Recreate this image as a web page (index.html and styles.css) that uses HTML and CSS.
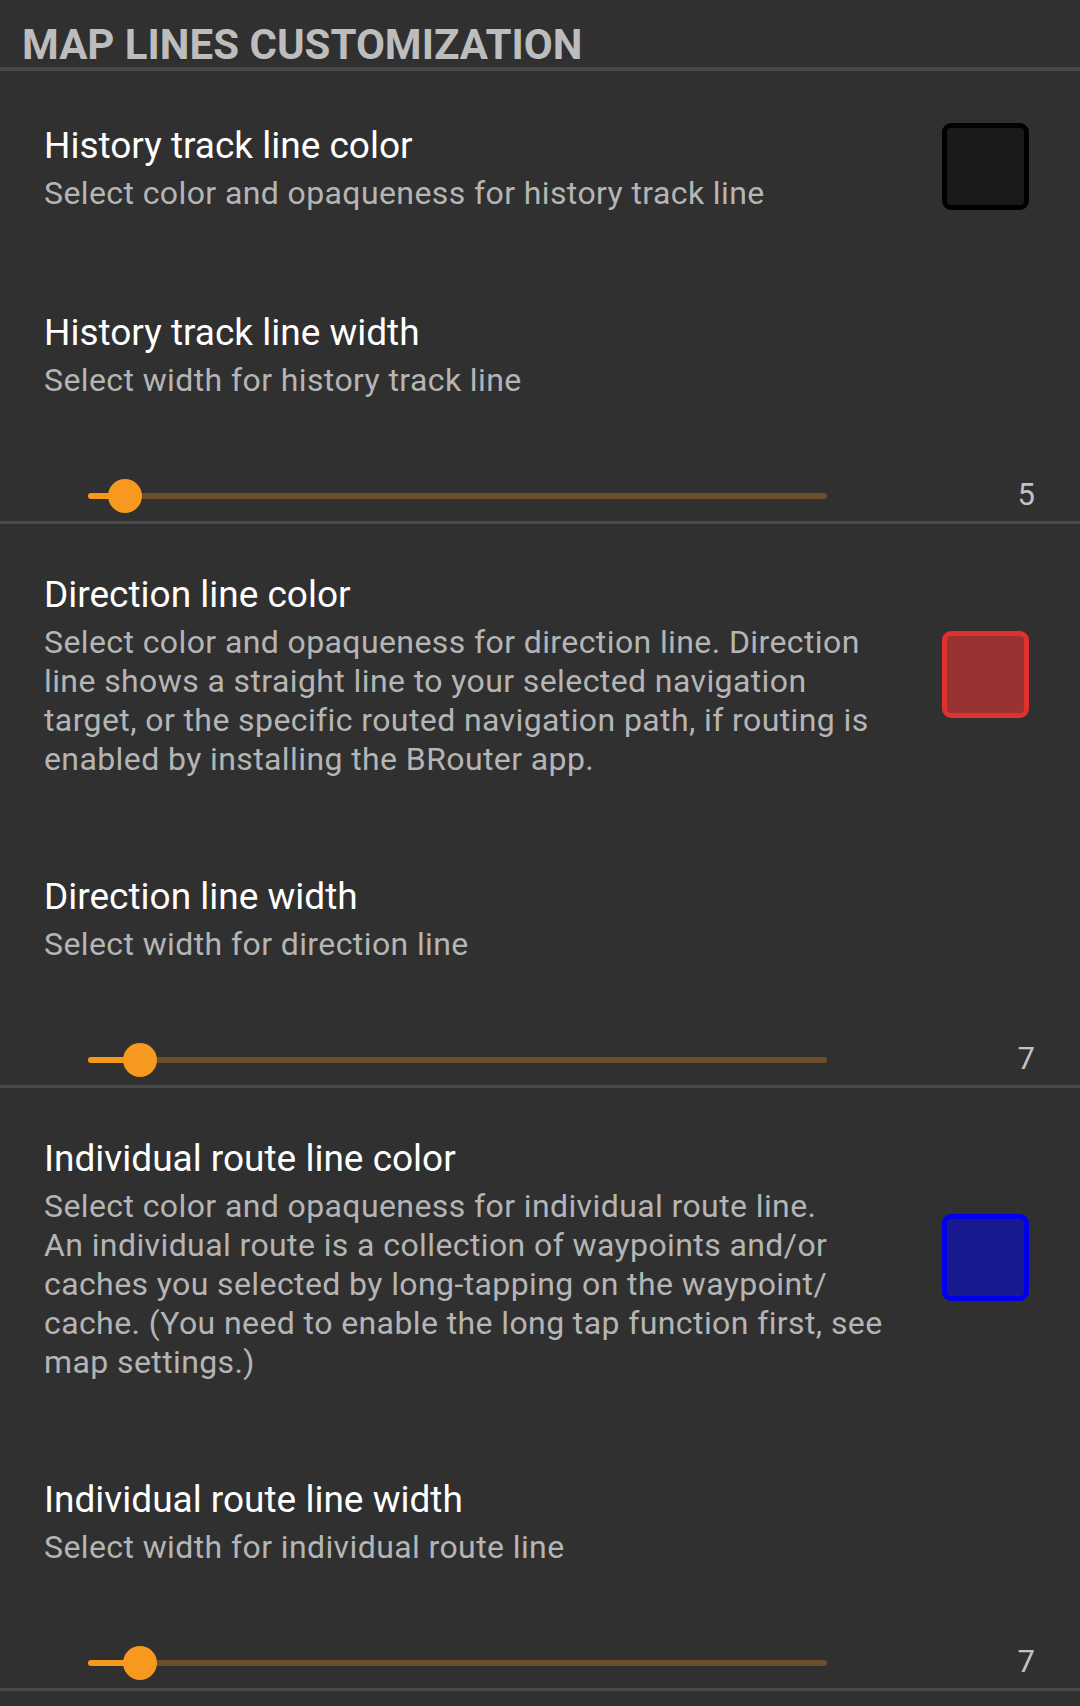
FILE: index.html
```html
<!DOCTYPE html>
<html lang="en">
<head>
<meta charset="utf-8">
<title>Map lines customization</title>
<link rel="stylesheet" href="styles.css">
</head>
<body>
<div class="screen">
  <div class="category-title">MAP LINES CUSTOMIZATION</div>

  <div class="pref pref-color pref-first">
    <div class="pref-text">
      <div class="pref-title">History track line color</div>
      <div class="pref-summary">Select color and opaqueness for history track line</div>
    </div>
    <div class="swatch swatch-black"></div>
  </div>

  <div class="pref pref-slider">
    <div class="pref-text">
      <div class="pref-title">History track line width</div>
      <div class="pref-summary">Select width for history track line</div>
    </div>
    <div class="slider-row">
      <div class="track">
        <div class="track-fill" style="width:5%"></div>
        <div class="thumb" style="left:5%"></div>
      </div>
      <div class="slider-value">5</div>
    </div>
  </div>

  <div class="pref pref-color">
    <div class="pref-text">
      <div class="pref-title">Direction line color</div>
      <div class="pref-summary">Select color and opaqueness for direction line. Direction line shows a straight line to your selected navigation target, or the specific routed navigation path, if routing is enabled by installing the BRouter app.</div>
    </div>
    <div class="swatch swatch-red"></div>
  </div>

  <div class="pref pref-slider">
    <div class="pref-text">
      <div class="pref-title">Direction line width</div>
      <div class="pref-summary">Select width for direction line</div>
    </div>
    <div class="slider-row">
      <div class="track">
        <div class="track-fill" style="width:7%"></div>
        <div class="thumb" style="left:7%"></div>
      </div>
      <div class="slider-value">7</div>
    </div>
  </div>

  <div class="pref pref-color">
    <div class="pref-text">
      <div class="pref-title">Individual route line color</div>
      <div class="pref-summary">Select color and opaqueness for individual route line.<br>An individual route is a collection of waypoints and/or caches you selected by long-tapping on the waypoint/ cache. (You need to enable the long tap function first, see map settings.)</div>
    </div>
    <div class="swatch swatch-blue"></div>
  </div>

  <div class="pref pref-slider">
    <div class="pref-text">
      <div class="pref-title">Individual route line width</div>
      <div class="pref-summary">Select width for individual route line</div>
    </div>
    <div class="slider-row">
      <div class="track">
        <div class="track-fill" style="width:7%"></div>
        <div class="thumb" style="left:7%"></div>
      </div>
      <div class="slider-value">7</div>
    </div>
  </div>
</div>
</body>
</html>
```

FILE: styles.css
```css
html, body {
  margin: 0;
  padding: 0;
  background: #303030;
}

body {
  font-family: Roboto, "Noto Sans", sans-serif;
  width: 1080px;
  min-height: 1706px;
}

.screen {
  display: flex;
  flex-direction: column;
}

.category-title {
  padding: 23px 0 0 22px;
  font-size: 42px;
  line-height: 44px;
  font-weight: 700;
  color: #bdbdbd;
  border-bottom: 4px solid #474747;
}

.pref-text {
  width: 851px;
}

.pref-title {
  font-size: 37px;
  line-height: 44px;
  color: #ffffff;
}

.pref-summary {
  margin-top: 6px;
  font-size: 32px;
  line-height: 39px;
  letter-spacing: 0.4px;
  color: #b5b5b5;
}

.pref-color {
  display: flex;
  align-items: center;
  padding: 49px 51px 47px 44px;
}

.pref-first {
  padding-top: 52px;
  padding-bottom: 48px;
}

.swatch {
  width: 87px;
  height: 87px;
  box-sizing: border-box;
  margin-left: auto;
  margin-bottom: 4px;
  border: 5px solid #000;
  border-radius: 9px;
  flex-shrink: 0;
}

.swatch-black {
  background: #1a1a1a;
  border-color: #000000;
}

.swatch-red {
  background: #993333;
  border-color: #e03030;
}

.swatch-blue {
  background: #1a1a90;
  border-color: #0000ee;
}

.pref-slider {
  display: flex;
  flex-direction: column;
  padding: 49px 0 8px 0;
  border-bottom: 3px solid #4a4a4a;
}

.pref-slider .pref-text {
  padding-left: 44px;
}

.slider-row {
  display: flex;
  align-items: center;
  height: 34px;
  margin-top: 79px;
}

.track {
  position: relative;
  margin-left: 88px;
  width: 739px;
  height: 6px;
  border-radius: 3px;
  background: #6c4f2a;
}

.track-fill {
  height: 6px;
  border-radius: 3px;
  background: #f7981d;
}

.thumb {
  position: absolute;
  top: -14px;
  width: 34px;
  height: 34px;
  margin-left: -17px;
  border-radius: 50%;
  background: #f7991f;
}

.slider-value {
  margin-left: auto;
  margin-bottom: 3px;
  padding-right: 45px;
  font-size: 31px;
  line-height: 34px;
  color: #c2c2c2;
}
```
